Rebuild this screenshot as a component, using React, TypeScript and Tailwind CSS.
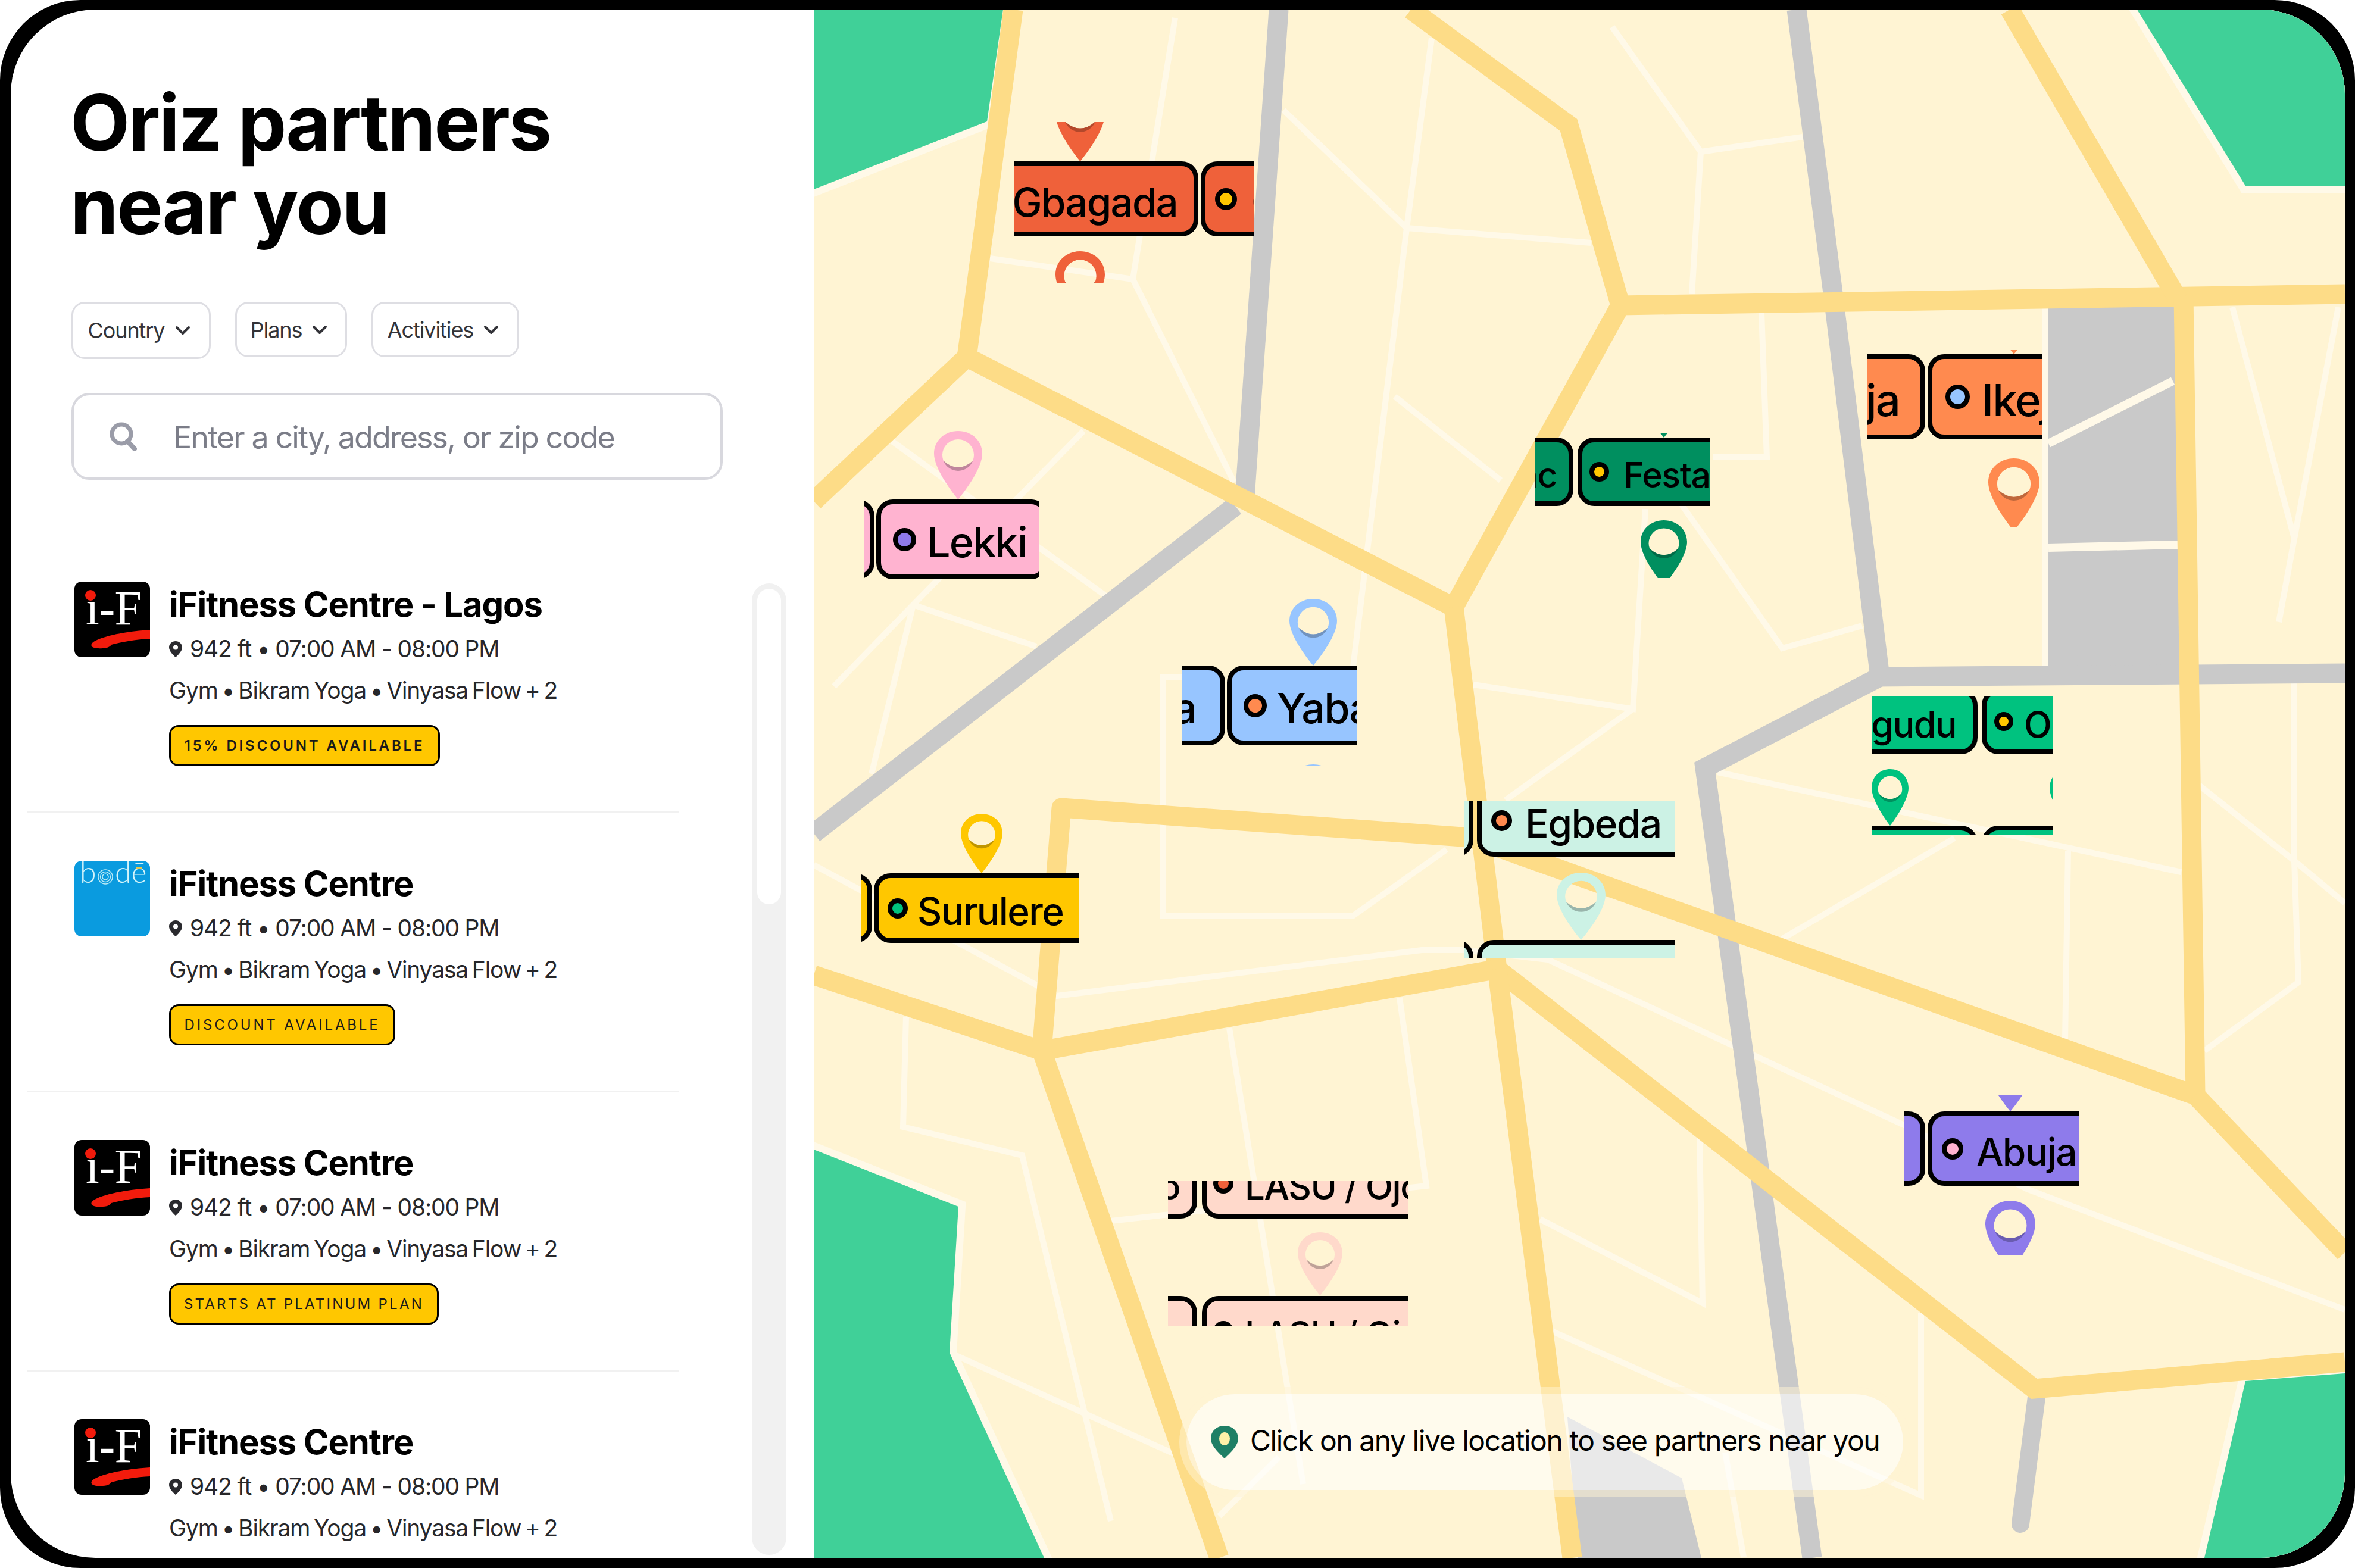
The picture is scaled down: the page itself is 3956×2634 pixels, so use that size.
import { ChevronDown } from 'lucide-react';

const MX = 1367;
const MY = 16;

const thinLines = [
  '1974,30 1903,469 2073,810',
  '1663,434 1903,469',
  '2156,185 2363,383 2405,64',
  '2363,383 2673,408',
  '2363,383 2272,1128',
  '2343,666 2521,807',
  '1497,740 1870,1010',
  '1401,1153 1534,1016 1820,724',
  '1534,1016 1464,1300',
  '1534,1016 1741,1086',
  '2030,1137 1953,1137 1953,1539 2272,1539 2430,1427',
  '2475,1150 2743,1191 2764,855',
  '2743,1191 2529,1344',
  '2708,45 2857,255 3028,230',
  '2857,255 2842,494',
  '2959,526 2968,768 2877,768',
  '2825,848 2994,1089 3128,1051',
  '3750,516 3854,905 3828,1045',
  '3928,516 3854,905',
  '3854,1147 3854,1446 3861,1650 3703,1765',
  '3694,1319 3854,1446 3939,1517',
  '2885,1297 3664,1465',
  '3474,1430 3469,1746',
  '3283,1408 2994,1577',
  '1367,1453 1775,1673 2388,1596 2459,1596 2600,1612 3205,1893 3404,1997 3939,2200',
  '1522,1708 1517,1893 1717,1941 1866,2555',
  '1595,2272 1974,2443',
  '2148,2448 2048,2547',
  '2065,1727 2189,2493',
  '2351,1676 2396,1992 1866,2051',
  '2587,2048 2860,2189 2855,1912',
  '2609,2237 3227,2512 3227,2205',
  '2898,2440 2929,2616',
  '3435,513 3435,1137',
];

const greens = [
  '1367,16 1685,16 1658,204 1367,318',
  '3590,16 3772,312 3939,312 3939,16',
  '1367,1931 1610,2027 1595,2272 1754,2617 1367,2617',
  '3772,2320 3939,2307 3939,2617 3703,2617',
];

const greyRoads = [
  '2148,16 2090,850',
  '2075,850 1367,1400',
  '3018,16 3080,500 3158,1137 2864,1290 3044,2617',
  '3150,1137 3939,1131',
];

const yellowRoads = [
  '1702,16 1624,600 1367,842',
  '1624,600 2442,1020 2722,513 2635,210 2370,16',
  '2722,513 3939,494',
  '3376,16 3660,505',
  '3668,497 3688,1840 2470,1407',
  '2442,1020 2515,1628',
  '1367,1638 1750,1765 2515,1628 3417,2333 3939,2288',
  '1750,1765 2048,2617',
  '2515,1628 2537,1800 2641,2617',
  '3688,1840 3939,2104',
];

function CityMap() {
  return (
    <svg className="absolute inset-0 w-full h-full" viewBox="1367 16 2572 2601" preserveAspectRatio="none">
      <rect x="3441" y="513" width="230" height="624" fill="#C9C9C9" />
      <polygon points="2633,2380 2825,2483 2858,2617 2650,2617" fill="#C9C9C9" />
      <g fill="none" stroke="#FFF9E8" strokeWidth="10">
        {thinLines.map((p) => (
          <polyline key={p} points={p} />
        ))}
        <polyline points="3441,745 3650,640" strokeWidth="14" />
        <polyline points="3441,920 3660,915" strokeWidth="14" />
      </g>
      {greens.map((p) => (
        <polygon key={p} points={p} fill="#FFF9E8" stroke="#FFF9E8" strokeWidth="24" />
      ))}
      {greens.map((p) => (
        <polygon key={p} points={p} fill="#40D098" />
      ))}
      <g fill="none" stroke="#C9C9C9" strokeWidth="33">
        {greyRoads.map((p) => (
          <polyline key={p} points={p} />
        ))}
        <polyline points="3422,2339 3394,2560" strokeLinecap="round" strokeWidth="30" />
      </g>
      <g fill="none" stroke="#FDDC87" strokeWidth="33">
        {yellowRoads.map((p) => (
          <polyline key={p} points={p} />
        ))}
        <polyline points="2470,1407 1783,1357 1750,1765" strokeLinejoin="round" />
      </g>
    </svg>
  );
}

function Pin({ color, left, top, w, h }: { color: string; left: number; top: number; w: number; h: number }) {
  return (
    <svg className="absolute" style={{ left, top, width: w, height: h }} viewBox="0 0 81 115" preserveAspectRatio="none">
      <path
        fillRule="evenodd"
        fill={color}
        d="M40.500 0C18 0 0 16 0 38C0 62 28 100 40.500 115C53 100 81 62 81 38C81 16 63 0 40.500 0ZM14 40.500A26.500 26.500 0 0 1 67 40.500A26.500 26.500 0 0 1 65.200 50Q40.500 72 15.800 50A26.500 26.500 0 0 1 14 40.500Z"
      />
      <path d="M15.800 50Q40.500 72 65.200 50A26.500 26.500 0 0 1 15.800 50Z" fill="#000" fillOpacity="0.25" />
    </svg>
  );
}

type Label = {
  x: number;
  y: number;
  w: number;
  h: number;
  name: string;
  color: string;
  dot: string;
  fs: number;
  cardH: number;
  rows: number[];
  split: number;
  next: number;
  dotL: number;
  textL: number;
  pr: number;
  pins: { cx: number; top: number; w: number; h: number }[];
};

const labels: Label[] = [
  {
    x: 1704, y: 205, w: 402, h: 270, name: 'Gbagada', color: '#EF613A', dot: '#FFC700', fs: 67, cardH: 126,
    rows: [271], split: 2013, next: 2017, dotL: 42, textL: 85, pr: 35,
    pins: [{ cx: 1814, top: 153, w: 83, h: 118 }, { cx: 1814, top: 422, w: 83, h: 118 }],
  },
  {
    x: 1451, y: 724, w: 295, h: 249, name: 'Lekki', color: '#FFB3D0', dot: '#8F7BEB', fs: 70, cardH: 134,
    rows: [839], split: 1469, next: 1472, dotL: 47, textL: 85, pr: 35,
    pins: [{ cx: 1609, top: 724, w: 81, h: 115 }],
  },
  {
    x: 2579, y: 727, w: 294, h: 244, name: 'Festac', color: '#008F5F', dot: '#FFC700', fs: 59, cardH: 115,
    rows: [735], split: 2643, next: 2650, dotL: 36, textL: 77, pr: 28,
    pins: [{ cx: 2795, top: 625, w: 78, h: 110 }, { cx: 2795, top: 874, w: 78, h: 110 }],
  },
  {
    x: 3136, y: 588, w: 295, h: 298, name: 'Ikeja', color: '#FF8A4F', dot: '#97C5FF', fs: 74, cardH: 143,
    rows: [595], split: 3234, next: 3238, dotL: 50, textL: 91, pr: 43,
    pins: [{ cx: 3383, top: 473, w: 86, h: 122 }, { cx: 3383, top: 770, w: 86, h: 122 }],
  },
  {
    x: 1986, y: 1006, w: 294, h: 280, name: 'Yaba', color: '#97C5FF', dot: '#FF8A4F', fs: 70, cardH: 134,
    rows: [1118], split: 2058, next: 2061, dotL: 47, textL: 84, pr: 49,
    pins: [{ cx: 2206, top: 1006, w: 80, h: 112 }, { cx: 2206, top: 1284, w: 80, h: 112 }],
  },
  {
    x: 1446, y: 1367, w: 366, h: 217, name: 'Surulere', color: '#FFC700', dot: '#00C27F', fs: 64, cardH: 117,
    rows: [1467], split: 1465, next: 1468, dotL: 40, textL: 73, pr: 60,
    pins: [{ cx: 1649, top: 1367, w: 70, h: 100 }],
  },
  {
    x: 2459, y: 1346, w: 354, h: 263, name: 'Egbeda', color: '#CCF2E5', dot: '#FF8A4F', fs: 66, cardH: 122,
    rows: [1317, 1579], split: 2475, next: 2481, dotL: 41, textL: 81, pr: 60,
    pins: [{ cx: 2656, top: 1466, w: 82, h: 113 }],
  },
  {
    x: 3145, y: 1170, w: 303, h: 232, name: 'Ogudu', color: '#00C27F', dot: '#FFC700', fs: 61, cardH: 110,
    rows: [1157, 1387], split: 3322, next: 3329, dotL: 37, textL: 71, pr: 36,
    pins: [{ cx: 3175, top: 1292, w: 62, h: 95 }, { cx: 3474, top: 1292, w: 62, h: 95 }],
  },
  {
    x: 3198, y: 1840, w: 294, h: 268, name: 'Abuja', color: '#8E7BEB', dot: '#FFB3D0', fs: 64, cardH: 125,
    rows: [1867], split: 3234, next: 3238, dotL: 42, textL: 82, pr: 35,
    pins: [{ cx: 3377, top: 1748, w: 84, h: 119 }, { cx: 3377, top: 2017, w: 84, h: 119 }],
  },
  {
    x: 1962, y: 1984, w: 403, h: 243, name: 'LASU / Ojo', color: '#FFD9CB', dot: '#EF613A', fs: 60, cardH: 118,
    rows: [1929, 2177], split: 2011, next: 2019, dotL: 36, textL: 72, pr: 29,
    pins: [{ cx: 2217, top: 2070, w: 75, h: 106 }],
  },
];

function Card({ label, place }: { label: Label; place: React.CSSProperties }) {
  const dotSize = Math.round(label.cardH * 0.29);
  return (
    <div
      className="absolute flex items-center border-[8px] border-black rounded-[28px] whitespace-nowrap font-['Inter',sans-serif] font-medium tracking-[-0.025em] text-black"
      style={{
        ...place,
        height: label.cardH,
        backgroundColor: label.color,
        fontSize: label.fs,
        paddingLeft: label.dotL - dotSize / 2 - 8,
        paddingRight: label.pr - 8,
        gap: label.textL - label.dotL - dotSize / 2,
      }}
    >
      <span
        className="shrink-0 rounded-full border-[8px] border-black"
        style={{ width: dotSize, height: dotSize, backgroundColor: label.dot }}
      />
      <span className="leading-none translate-y-[5px]">{label.name}</span>
    </div>
  );
}

function Marquee({ label }: { label: Label }) {
  return (
    <div
      className="absolute overflow-hidden"
      style={{ left: label.x - MX, top: label.y - MY, width: label.w, height: label.h }}
    >
      {label.pins.map((p) => (
        <Pin key={p.cx + '-' + p.top} color={label.color} left={p.cx - p.w / 2 - label.x} top={p.top - label.y} w={p.w} h={p.h} />
      ))}
      {label.rows.map((top) => (
        <div key={top}>
          <Card label={label} place={{ top: top - label.y, right: label.x + label.w - label.split }} />
          <Card label={label} place={{ top: top - label.y, left: label.next - label.x }} />
        </div>
      ))}
    </div>
  );
}

function IFitnessLogo() {
  return (
    <svg className="w-[127px] h-[127px] shrink-0" viewBox="0 0 127 127">
      <rect width="127" height="127" rx="12" fill="#000" />
      <text x="19" y="72" fill="#fff" fontFamily="'Liberation Serif', serif" fontSize="82" textLength="94">
        ı-F
      </text>
      <circle cx="27" cy="23" r="9" fill="#F21B0C" />
      <path d="M127 81C95 83 55 89 34 100C25 105 27 112 40 112C52 113 60 110 62 106C80 101 105 97 127 96Z" fill="#F21B0C" />
    </svg>
  );
}

function BodeLogo() {
  return (
    <svg className="w-[127px] h-[127px] shrink-0" viewBox="0 0 127 127">
      <rect width="127" height="127" rx="12" fill="#0A9BDF" />
      <g fill="#D4F4FA" fontFamily="Lato, sans-serif" fontWeight="300" fontSize="50">
        <text x="9" y="37">b</text>
        <text x="68" y="37">dē</text>
      </g>
      <g fill="none" stroke="#BDEBF6" strokeWidth="1.5">
        <circle cx="52" cy="27" r="12" />
        <circle cx="52" cy="27" r="8.5" />
        <circle cx="52" cy="27" r="5" />
      </g>
      <rect x="104" y="11" width="9" height="3" fill="#E8C84A" />
    </svg>
  );
}

function SmallPin() {
  return (
    <svg className="w-[22px] h-[27px] shrink-0" viewBox="0 0 22 27">
      <path
        fillRule="evenodd"
        fill="#2A2A2E"
        d="M11 0C5 0 0 4.500 0 10.500C0 17 7.500 24 11 27C14.500 24 22 17 22 10.500C22 4.500 17 0 11 0ZM7 10.500A4 4 0 0 0 15 10.500A4 4 0 0 0 7 10.500Z"
      />
    </svg>
  );
}

type Partner = { name: string; logo: 'if' | 'bode'; badge?: string; badgeClass?: string; badgeW?: number };

const partners: Partner[] = [
  { name: 'iFitness Centre - Lagos', logo: 'if', badge: '15% DISCOUNT AVAILABLE', badgeClass: 'font-semibold tracking-[0.16em]', badgeW: 455 },
  { name: 'iFitness Centre', logo: 'bode', badge: 'DISCOUNT AVAILABLE', badgeClass: 'font-normal tracking-[0.16em]', badgeW: 380 },
  { name: 'iFitness Centre', logo: 'if', badge: 'STARTS AT PLATINUM PLAN', badgeClass: 'font-normal tracking-[0.135em]', badgeW: 453 },
  { name: 'iFitness Centre', logo: 'if' },
];

function PartnerRow({ partner, last }: { partner: Partner; last: boolean }) {
  return (
    <div className={`flex pl-[80px] pt-[80px] h-[469px] shrink-0 ${last ? '' : 'border-b-[3px] border-[#F1F1F1]'}`}>
      {partner.logo === 'if' ? <IFitnessLogo /> : <BodeLogo />}
      <div className="ml-[32px] flex flex-col">
        <h3 className="mt-[7px] text-[58px] leading-[62px] font-bold tracking-[-0.02em] text-black">{partner.name}</h3>
        <div className="mt-[14px] flex items-center gap-[13px] h-[60px] text-[39px] text-[#27272A] tracking-[-0.03em]">
          <SmallPin />
          <span>942 ft • 07:00 AM - 08:00 PM</span>
        </div>
        <div className="mt-[10px] h-[60px] flex items-center text-[39px] text-[#27272A] tracking-[-0.03em] [word-spacing:-3px]">
          Gym • Bikram Yoga • Vinyasa Flow + 2
        </div>
        {partner.badge && (
          <div
            className={`mt-[28px] h-[69px] flex items-center justify-center whitespace-nowrap rounded-[16px] border-[3px] border-black bg-[#FFC700] text-[24px] text-[#1A1A1A] ${partner.badgeClass}`}
            style={{ width: partner.badgeW }}
          >
            {partner.badge}
          </div>
        )}
      </div>
    </div>
  );
}

function FilterButton({ label, w, h }: { label: string; w: string; h: string }) {
  return (
    <button className={`${w} ${h} flex items-center justify-center gap-[10px] rounded-[22px] border-[3px] border-[#DEDEE3] text-[36px] tracking-[-0.03em] text-[#333338]`}>
      {label}
      <ChevronDown className="w-[40px] h-[40px]" strokeWidth={2.4} />
    </button>
  );
}

export default function App() {
  return (
    <div className="w-[3956px] h-[2634px] bg-white font-['Inter',sans-serif]">
      <div className="w-full h-full rounded-[135px] bg-black pl-[18px] pr-[17px] pt-[16px] pb-[17px]">
        <div className="w-full h-full flex overflow-hidden rounded-[142px]">
          <aside className="w-[1349px] shrink-0 bg-white flex flex-col overflow-hidden">
            <div className="pl-[102px] pt-[120px]">
              <h1 className="-ml-[2px] text-[130px] leading-[140px] font-bold tracking-[-0.02em] text-black">
                Oriz partners
                <br />
                near you
              </h1>
              <div className="mt-[91px] flex items-start gap-[41px]">
                <FilterButton label="Country" w="w-[234px]" h="h-[96px]" />
                <FilterButton label="Plans" w="w-[188px]" h="h-[93px]" />
                <FilterButton label="Activities" w="w-[248px]" h="h-[93px]" />
              </div>
              <div className="mt-[57px] w-[1094px] h-[146px] flex items-center pl-[60px] rounded-[30px] border-[4px] border-[#D8D8DE]">
                <svg className="w-[46px] h-[48px] shrink-0" viewBox="0 0 46 48" fill="none" stroke="#9A9CA8">
                  <circle cx="20" cy="20" r="16" strokeWidth="7" />
                  <line x1="30" y1="32" x2="42" y2="45" strokeWidth="8" strokeLinecap="round" />
                </svg>
                <span className="ml-[61px] mt-[3px] text-[52px] tracking-[-0.037em] text-[#7B7D88]">Enter a city, address, or zip code</span>
              </div>
            </div>
            <div className="flex flex-1 min-h-0 mt-[91px] pl-[27px]">
              <div className="w-[1095px] shrink-0 flex flex-col">
                {partners.map((p, i) => (
                  <PartnerRow key={i} partner={p} last={i === partners.length - 1} />
                ))}
              </div>
              <div className="ml-[123px] mt-[83px] w-[58px] h-[1632px] rounded-full bg-[#F1F1F1] px-[9px] pt-[9px]">
                <div className="h-[530px] rounded-full bg-white" />
              </div>
            </div>
          </aside>
          <main className="relative flex-1 overflow-hidden bg-[#FFF4D3]">
            <CityMap />
            {labels.map((l) => (
              <Marquee key={l.name} label={l} />
            ))}
            <div className="absolute left-[626px] top-[2326px] w-[1204px] h-[161px] flex items-center rounded-full bg-white/60 shadow-[0_0_0_12px_rgba(255,244,212,0.5)]">
              <svg className="ml-[41px] w-[46px] h-[55px] shrink-0" viewBox="0 0 46 55">
                <path d="M23 0C10 0 0 9 0 22C0 34 15 47 23 55C31 47 46 34 46 22C46 9 36 0 23 0Z" fill="#1F7F65" />
                <ellipse cx="23" cy="22" rx="9" ry="11" fill="#FFF0A8" />
              </svg>
              <span className="ml-[20px] mb-[5px] text-[48px] tracking-[-0.03em] text-black whitespace-nowrap">
                Click on any live location to see partners near you
              </span>
            </div>
          </main>
        </div>
      </div>
    </div>
  );
}
